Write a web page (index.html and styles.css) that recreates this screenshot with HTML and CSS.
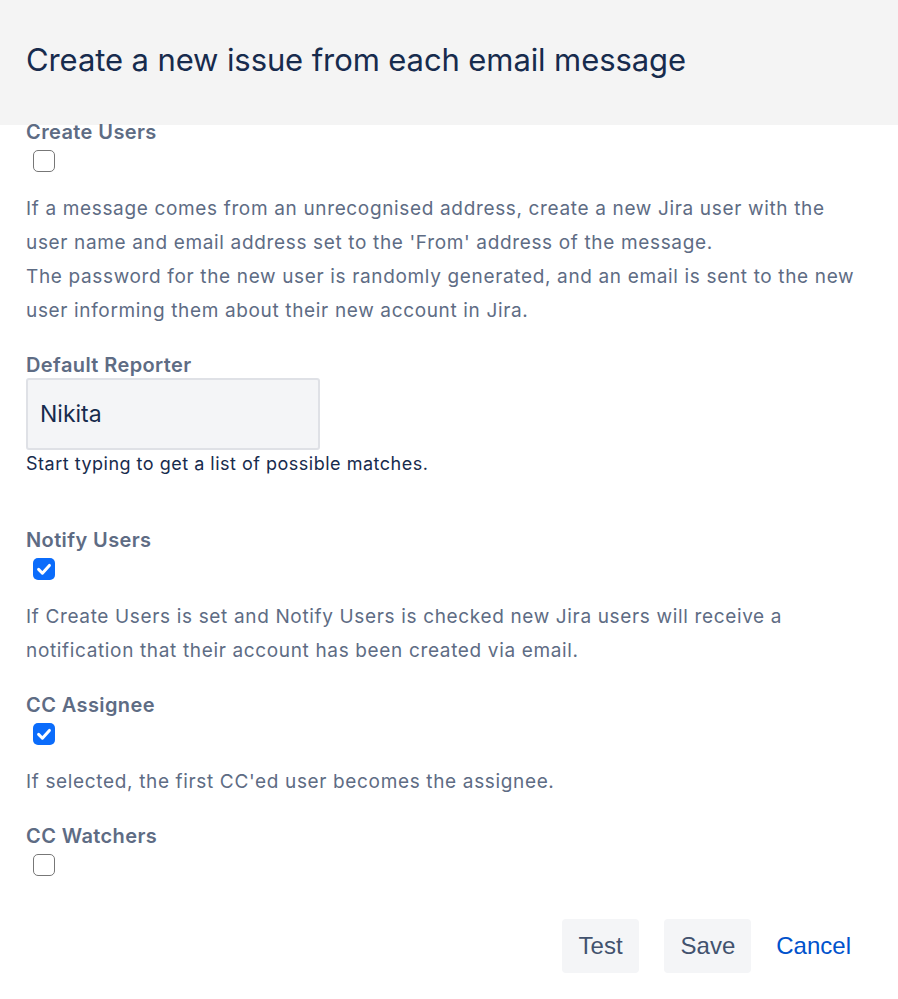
FILE: index.html
```html
<!DOCTYPE html>
<html lang="en">
<head>
  <meta charset="UTF-8" />
  <title>Create a new issue from each email message</title>
  <link rel="stylesheet" href="styles.css">
</head>
<body>
  <header class="dialog-header">
    <h1>Create a new issue from each email message</h1>
  </header>

  <form class="handler-form">
    <div class="field field-first">
      <label class="field-label">Create Users</label>
      <span class="checkbox"></span>
      <p class="field-desc">If a message comes from an unrecognised address, create a new Jira user with the user name and email address set to the 'From' address of the message.<br>The password for the new user is randomly generated, and an email is sent to the new user informing them about their new account in Jira.</p>
    </div>

    <div class="field field-input">
      <label class="field-label">Default Reporter</label>
      <div class="text-input">Nikita</div>
      <p class="field-help">Start typing to get a list of possible matches.</p>
    </div>

    <div class="field">
      <label class="field-label">Notify Users</label>
      <span class="checkbox checked">
        <svg viewBox="0 0 22 22" width="22" height="22"><path d="M5.6 11.4l3.8 3.8 7-7.8" fill="none" stroke="#fff" stroke-width="3" stroke-linecap="round" stroke-linejoin="round"/></svg>
      </span>
      <p class="field-desc">If Create Users is set and Notify Users is checked new Jira users will receive a notification that their account has been created via email.</p>
    </div>

    <div class="field">
      <label class="field-label">CC Assignee</label>
      <span class="checkbox checked">
        <svg viewBox="0 0 22 22" width="22" height="22"><path d="M5.6 11.4l3.8 3.8 7-7.8" fill="none" stroke="#fff" stroke-width="3" stroke-linecap="round" stroke-linejoin="round"/></svg>
      </span>
      <p class="field-desc">If selected, the first CC'ed user becomes the assignee.</p>
    </div>

    <div class="field">
      <label class="field-label">CC Watchers</label>
      <span class="checkbox"></span>
    </div>

    <div class="form-actions">
      <button type="button" class="btn">Test</button>
      <button type="button" class="btn">Save</button>
      <a href="#" class="cancel-link">Cancel</a>
    </div>
  </form>
</body>
</html>
```

FILE: styles.css
```css
* {
  box-sizing: border-box;
}

body {
  margin: 0;
  font-family: 'Inter', 'Noto Sans', sans-serif;
  color: #172b4d;
  background: #ffffff;
}

.dialog-header {
  height: 125px;
  background: #f4f4f4;
  padding: 40px 26px 0;
}

.dialog-header h1 {
  margin: 0;
  font-size: 31px;
  line-height: 40px;
  font-weight: 400;
  letter-spacing: -0.1px;
  color: #172b4d;
}

.handler-form {
  padding: 0 26px;
}

.field {
  display: flex;
  flex-direction: column;
  align-items: flex-start;
  margin-top: 25px;
}

.field-first {
  margin-top: -5px;
}

.field-input + .field {
  margin-top: 52px;
}

.field-label {
  font-size: 20px;
  line-height: 24px;
  font-weight: 600;
  letter-spacing: 0.4px;
  color: #5e6c84;
}

.checkbox {
  display: block;
  width: 22px;
  height: 22px;
  margin: 6px 0 0 7px;
  border: 1.5px solid #777777;
  border-radius: 5px;
  background: #ffffff;
}

.checkbox.checked {
  border: none;
  background: #0b6cfb;
}

.checkbox svg {
  display: block;
}

.field-desc {
  max-width: 840px;
  margin: 20px 0 0;
  font-size: 19px;
  line-height: 34px;
  letter-spacing: 0.65px;
  color: #5e6c84;
}

.text-input {
  width: 294px;
  height: 72px;
  margin-top: 1px;
  padding: 0 12px;
  display: flex;
  align-items: center;
  background: #f4f5f7;
  border: 2px solid #dfe1e6;
  border-radius: 3px;
  font-size: 23px;
  color: #172b4d;
}

.field-help {
  margin: 2px 0 0;
  font-size: 18px;
  line-height: 24px;
  letter-spacing: 0.5px;
  color: #172b4d;
}

.form-actions {
  display: flex;
  justify-content: flex-end;
  align-items: center;
  gap: 25px;
  margin-top: 43px;
  padding-right: 21px;
}

.btn {
  height: 54px;
  padding: 0 16px 0 17px;
  border: none;
  border-radius: 4px;
  background: #f4f5f7;
  color: #42526e;
  font-family: 'Liberation Sans', Arial, sans-serif;
  font-size: 24px;
  cursor: pointer;
}

.cancel-link {
  font-family: 'Liberation Sans', Arial, sans-serif;
  font-size: 24px;
  color: #0052cc;
  text-decoration: none;
}
```
